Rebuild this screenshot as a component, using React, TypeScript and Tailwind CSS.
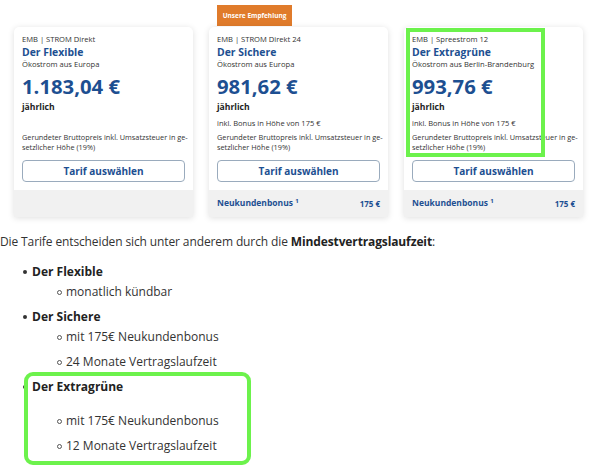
const tariffs = [
  {
    brand: "EMB | STROM Direkt",
    name: "Der Flexible",
    origin: "Ökostrom aus Europa",
    price: "1.183,04 €",
    bonus: null as string | null,
  },
  {
    brand: "EMB | STROM Direkt 24",
    name: "Der Sichere",
    origin: "Ökostrom aus Europa",
    price: "981,62 €",
    bonus: "175 €",
    badge: "Unsere Empfehlung",
  },
  {
    brand: "EMB | Spreestrom 12",
    name: "Der Extragrüne",
    origin: "Ökostrom aus Berlin-Brandenburg",
    price: "993,76 €",
    bonus: "175 €",
    marked: true,
  },
];

function TariffCard({ t }: { t: (typeof tariffs)[number] & { badge?: string; marked?: boolean } }) {
  return (
    <div className="w-[179px] flex flex-col">
      <div className="h-[27px] pt-[5px] pl-[8px]">
        {t.badge && (
          <div className="w-[75px] h-[21px] bg-[#e07b2b] text-white font-bold text-[6.5px] flex items-center justify-center">
            {t.badge}
          </div>
        )}
      </div>
      <div className="relative bg-white rounded-t-[5px] shadow-[0_1px_6px_rgba(0,0,0,0.13)]">
        {t.marked && (
          <div className="absolute left-[2px] top-[1px] w-[139px] h-[129px] border-[4px] border-[#6cf24c] pointer-events-none" />
        )}
        <div className="px-[8px] pt-[7px] pb-[8px]">
          <div className="text-[7.6px] leading-[10px] text-[#333]">{t.brand}</div>
          <div className="text-[10.4px] leading-[16px] font-bold text-[#1d4f91]">{t.name}</div>
          <div className="text-[7.6px] leading-[9px] text-[#333]">{t.origin}</div>
          <div className="mt-[4px] text-[20.3px] leading-[27px] font-bold text-[#1d4f91]">{t.price}</div>
          <div className="mt-[1px] text-[8.6px] leading-[12px] font-bold text-[#222]">jährlich</div>
          <div className="mt-[5px] text-[7.5px] leading-[10px] text-[#333] h-[10px]">
            {t.bonus ? `inkl. Bonus in Höhe von ${t.bonus}` : ""}
          </div>
          <div className="mt-[4px] text-[7.3px] leading-[10px] text-[#333] whitespace-nowrap">
            Gerundeter Bruttopreis inkl. Umsatzsteuer in ge-
            <br />
            setzlicher Höhe (19%)
          </div>
          <button className="mt-[8px] w-full h-[22px] rounded-[4px] border border-[#9aabbd] text-[10px] font-bold text-[#1d4f91] bg-white">
            Tarif auswählen
          </button>
        </div>
        <div className="h-[27px] bg-[#f1f1f1] px-[8px] flex items-center justify-between text-[8.5px] font-bold text-[#1d4f91]">
          {t.bonus && (
            <>
              <span>
                Neukundenbonus <sup className="text-[6px]">1</sup>
              </span>
              <span className="text-[8px]">{t.bonus}</span>
            </>
          )}
        </div>
      </div>
    </div>
  );
}

function Bullet({ children }: { children: React.ReactNode }) {
  return (
    <div className="flex items-center h-[20px]">
      <span className="ml-[23px] mr-[5px] w-[4px] h-[4px] rounded-full bg-[#333]" />
      <span className="font-bold text-[#222]">{children}</span>
    </div>
  );
}

function SubBullet({ children, className = "" }: { children: React.ReactNode; className?: string }) {
  return (
    <div className={`flex items-center h-[20px] ${className}`}>
      <span className="ml-[57px] mr-[4px] w-[5px] h-[5px] rounded-full border border-[#555]" />
      <span>{children}</span>
    </div>
  );
}

export default function App() {
  return (
    <div className="w-[590px] h-[469px] bg-white overflow-hidden font-['Open_Sans',sans-serif] text-[#333]">
      <div className="h-[218px] flex gap-[16px] pl-[14px]">
        {tariffs.map((t) => (
          <TariffCard key={t.name} t={t} />
        ))}
      </div>

      <div className="text-[12px]">
        <p className="mt-[14px] leading-[20px] tracking-[-0.12px]">
          Die Tarife entscheiden sich unter anderem durch die{" "}
          <b className="text-[#222]">Mindestvertragslaufzeit</b>:
        </p>
        <div className="mt-[10px]">
          <Bullet>Der Flexible</Bullet>
          <SubBullet>monatlich kündbar</SubBullet>
        </div>
        <div className="mt-[5px]">
          <Bullet>Der Sichere</Bullet>
          <SubBullet>mit 175€ Neukundenbonus</SubBullet>
          <SubBullet className="mt-[5px]">24 Monate Vertragslaufzeit</SubBullet>
        </div>
        <div className="mt-[5px] relative">
          <div className="absolute left-[24px] top-[-5px] w-[227px] h-[93px] border-[4px] border-[#6cf24c] rounded-[9px]" />
          <Bullet>Der Extragrüne</Bullet>
          <SubBullet className="mt-[14px]">mit 175€ Neukundenbonus</SubBullet>
          <SubBullet className="mt-[5px]">12 Monate Vertragslaufzeit</SubBullet>
        </div>
      </div>
    </div>
  );
}
